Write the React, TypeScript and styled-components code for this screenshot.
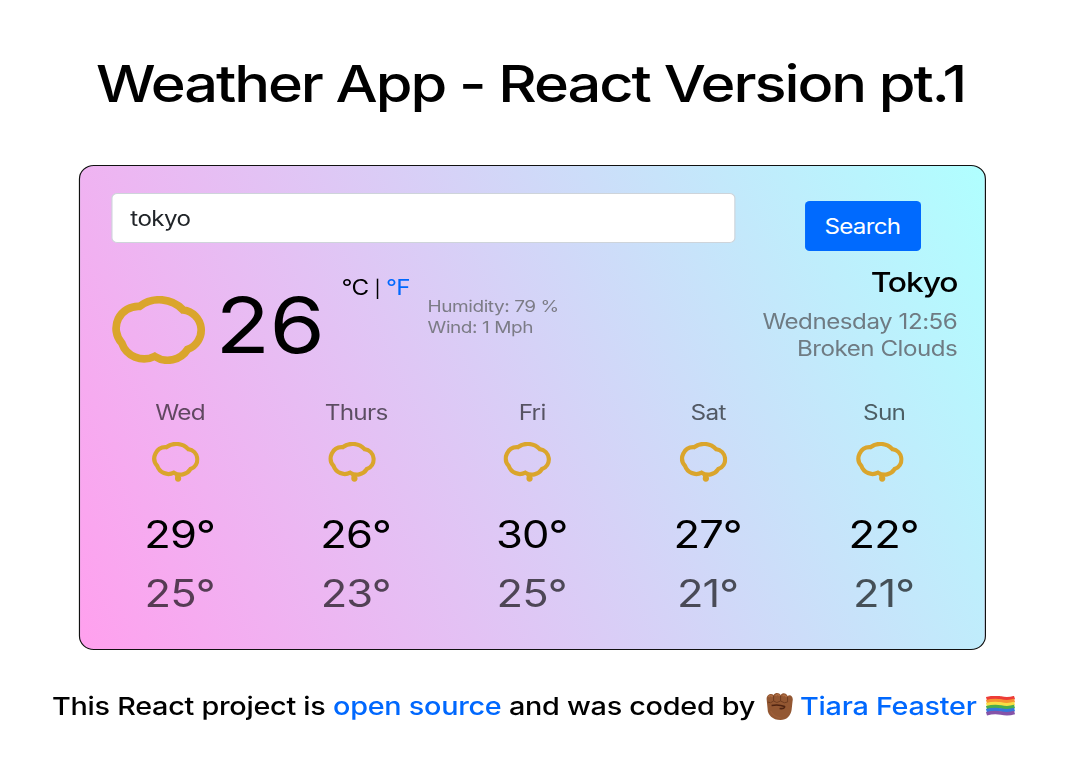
import React from "react";
import styled, { createGlobalStyle } from "styled-components";

// The page is set in a wide face: everything is laid out narrow and widened by STRETCH.
const STRETCH = 1.16;
const w = (n: number) => `${(n / STRETCH).toFixed(3)}px`;

const GlobalStyle = createGlobalStyle`
  * { box-sizing: border-box; }
  html, body { margin: 0; background: #fff; overflow: hidden; }
  body { font-family: Inter, "Liberation Sans", sans-serif; color: #000; }
`;

const Page = styled.div`
  width: ${w(1073)};
  height: 761px;
  transform: scaleX(${STRETCH});
  transform-origin: 0 0;
  white-space: nowrap;
`;

const Title = styled.h1`
  margin: 0;
  padding: 52.6px 0 0 ${w(96)};
  height: 113px;
  font-size: 51.3px;
  line-height: 60px;
  font-weight: 500;
  letter-spacing: -1.76px;
`;

const Card = styled.main`
  margin: 52px 0 0 ${w(79)};
  width: ${w(907.5)};
  height: 485px;
  border: 1px solid #111;
  border-radius: ${w(15)} / 14px;
  background: linear-gradient(68deg, #ffa0ee 0%, #b0ffff 100%);
`;

const SearchForm = styled.form`
  display: flex;
  align-items: flex-start;
  padding: 27px 0 0 ${w(31)};
  height: 103px;
`;

const SearchInput = styled.input`
  width: ${w(624)};
  height: 50px;
  padding: 0 ${w(18)};
  border: 1px solid #ced4da;
  border-radius: 5px;
  background: #fff;
  color: #212529;
  font: 400 20.8px Inter, sans-serif;
  letter-spacing: -0.5px;
  outline: none;
`;

const SearchButton = styled.button`
  margin: 8px 0 0 ${w(69.5)};
  width: ${w(116.5)};
  height: 50px;
  padding: 0 ${w(1)} 0 0;
  border: 0;
  border-radius: 4px;
  background: #006afe;
  color: #fff;
  font: 400 20.8px Inter, sans-serif;
  letter-spacing: -0.6px;
`;

const Current = styled.section`
  display: flex;
  align-items: flex-start;
  height: 131px;
  padding: 0 ${w(28)} 0 ${w(31.5)};
`;

const CurrentIcon = styled.div`
  width: ${w(95)};
  margin-top: 27px;
`;

const Temperature = styled.div`
  width: ${w(121)};
  padding-left: ${w(9)};
  margin-top: 16px;
  font-size: 77px;
  line-height: 80px;
  letter-spacing: -0.6px;
`;

const Units = styled.div`
  width: ${w(100)};
  padding-left: ${w(14)};
  margin-top: 4px;
  font-size: 20.8px;
  line-height: 30px;
  letter-spacing: -0.7px;
`;

const Divider = styled.span`
  display: inline-block;
  width: 5px;
  font-size: 17px;
  line-height: 20px;
`;

const Link = styled.a`
  color: #0068fe;
  text-decoration: none;
`;

const Details = styled.div`
  margin-top: 26.6px;
  color: #7c7c86;
  font-size: 16.4px;
  line-height: 21.5px;
  letter-spacing: -0.38px;
`;

const Place = styled.div`
  margin: -3px 0 0 auto;
  text-align: right;
  color: #6f7b83;
  font-size: 20.8px;
  line-height: 26.5px;
  letter-spacing: -0.4px;
`;

const City = styled.h2`
  margin: 0 0 11px;
  color: #000;
  font-size: 27.4px;
  line-height: 32px;
  font-weight: 500;
  letter-spacing: -0.95px;
`;

const Forecast = styled.section`
  display: grid;
  grid-template-columns: repeat(5, ${w(176)});
  padding-left: ${w(12)};
`;

const Day = styled.div`
  display: flex;
  flex-direction: column;
  align-items: center;
`;

const DayName = styled.div`
  font-size: 21px;
  line-height: 26px;
  letter-spacing: -0.65px;
  opacity: 0.6;
`;

const DayIcon = styled.div`
  height: 40px;
  width: ${w(48)};
  margin: 16px ${w(8.5)} 0 0;
`;

const DayTemp = styled.div<{ $low?: boolean }>`
  margin: ${(p) => (p.$low ? "9px" : "28.2px")} ${w(1)} 0 0;
  font-size: 37.5px;
  line-height: 50px;
  letter-spacing: -0.8px;
  opacity: ${(p) => (p.$low ? 0.65 : 1)};
`;

const Footer = styled.footer`
  display: flex;
  align-items: center;
  margin-top: 41px;
  padding-left: ${w(52)};
  font-size: 24.8px;
  line-height: 30px;
  font-weight: 500;
  letter-spacing: -0.22px;
  white-space: pre;
`;

const Drawing = styled.svg<{ $w: number; $h: number }>`
  display: block;
  flex: none;
  width: ${(p) => w(p.$w)};
  height: ${(p) => p.$h}px;
`;

const Fist = styled(Drawing)`
  margin: 0 ${w(6)} 0 ${w(11)};
`;

const Flag = styled(Drawing)`
  margin-left: ${w(9.5)};
`;

const cloud =
  "M212 454A98 98 0 0 1 342 465A61 61 0 0 1 355 583A70 70 0 0 1 257 604A70 70 0 0 1 159 564A66 66 0 0 1 212 454Z";

function Cloud({ small }: { small?: boolean }) {
  return (
    <Drawing
      $w={small ? 48 : 95}
      $h={small ? 40 : 68}
      viewBox={small ? "128 423 283 236" : "128 423 283 204"}
      preserveAspectRatio="none"
      fill="none"
      stroke="#daa52c"
      strokeWidth={small ? 25 : 23}
    >
      <path d={cloud} />
      {small && <circle cx="282" cy="639" r="9" strokeWidth={19} />}
      {small && <path d="M275 616L280 634" />}
    </Drawing>
  );
}

const days = [
  ["Wed", 29, 25],
  ["Thurs", 26, 23],
  ["Fri", 30, 25],
  ["Sat", 27, 21],
  ["Sun", 22, 21],
];

export default function App() {
  return (
    <>
      <GlobalStyle />
      <Page>
        <Title>Weather App - React Version pt.1</Title>
        <Card>
          <SearchForm>
            <SearchInput defaultValue="tokyo" />
            <SearchButton type="button">Search</SearchButton>
          </SearchForm>
          <Current>
            <CurrentIcon>
              <Cloud />
            </CurrentIcon>
            <Temperature>26</Temperature>
            <Units>
              °C <Divider>|</Divider> <Link>°F</Link>
            </Units>
            <Details>
              <div>Humidity: 79 %</div>
              <div>Wind: 1 Mph</div>
            </Details>
            <Place>
              <City>Tokyo</City>
              <div>Wednesday 12:56</div>
              <div>Broken Clouds</div>
            </Place>
          </Current>
          <Forecast>
            {days.map(([name, high, low]) => (
              <Day key={name}>
                <DayName>{name}</DayName>
                <DayIcon>
                  <Cloud small />
                </DayIcon>
                <DayTemp>{high}°</DayTemp>
                <DayTemp $low>{low}°</DayTemp>
              </Day>
            ))}
          </Forecast>
        </Card>
        <Footer>
          <span>This React project is </span>
          <Link>open source</Link>
          <span> and was coded by</span>
          <Fist $w={28} $h={27} viewBox="0 0 28 27" preserveAspectRatio="none">
            <path
              d="M1 6C1 1 6 0 8 2C10-1 14 0 15 2C17-1 21 0 22 3C25 1 28 4 27 8L26 17C25 23 21 27 15 27C7 27 2 22 2 16Z"
              fill="#935732"
            />
            <path d="M3 4Q5 1 7 4M10 3Q12 0 14 3M17 3Q19 1 21 4" stroke="#ad6b42" strokeWidth="1.6" fill="none" />
            <path
              d="M8 3V8M15 3V8M22 4V9M2 9Q5 11 8 8Q11 11 15 8Q19 11 22 9"
              stroke="#6f3c20"
              strokeWidth="1"
              fill="none"
            />
            <path d="M6 12.5Q13 11 19 13.5Q19.5 16 14 15.5" stroke="#4f2412" strokeWidth="1.6" fill="none" />
            <path d="M5 18Q8 24 15 25" stroke="#9c5c37" strokeWidth="1.5" fill="none" />
          </Fist>
          <Link>Tiara Feaster</Link>
          <Flag $w={29} $h={20} viewBox="0 0 29 20" preserveAspectRatio="none" fill="none" strokeWidth="3.5">
            {["#ed3c37", "#f79432", "#f9df45", "#49ad4e", "#3478dd", "#8553a8"].map((color, i) => (
              <path key={color} d={`M.5 ${2.8 + i * 3}Q8 ${0.5 + i * 3} 15 ${2 + i * 3}T28.5 ${1.5 + i * 3}`} stroke={color} />
            ))}
          </Flag>
        </Footer>
      </Page>
    </>
  );
}
